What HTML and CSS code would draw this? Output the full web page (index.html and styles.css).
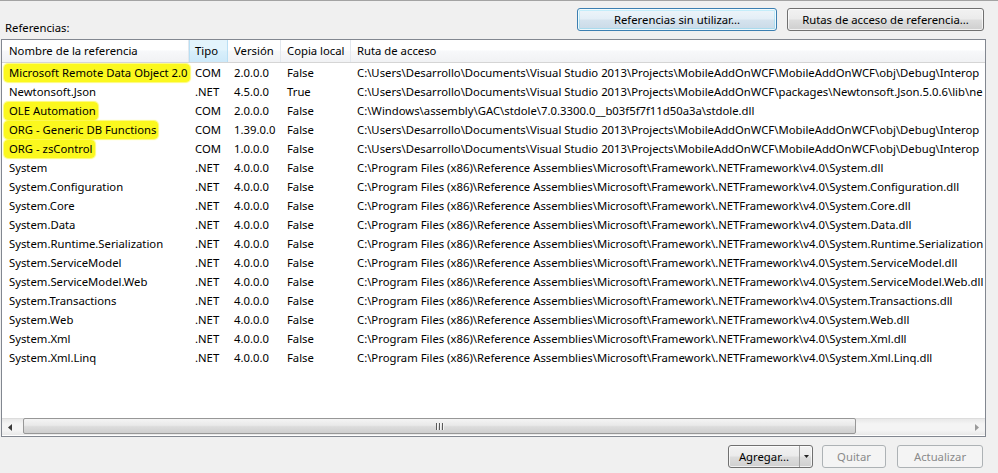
FILE: index.html
```html
<!DOCTYPE html>
<html lang="es">
<head>
<meta charset="utf-8">
<title>Referencias</title>
<link rel="stylesheet" href="styles.css">
</head>
<body>
<div class="dialog">
  <div class="top">
    <span class="label">Referencias:</span>
    <div class="top-buttons">
      <button class="btn btn-default btn-unused">Referencias sin utilizar...</button>
      <button class="btn btn-paths">Rutas de acceso de referencia...</button>
    </div>
  </div>

  <div class="list">
    <div class="hdr row-grid">
      <div class="hc">Nombre de la referencia</div>
      <div class="hc hc-sorted">Tipo</div>
      <div class="hc">Versión</div>
      <div class="hc">Copia local</div>
      <div class="hc hc-last">Ruta de acceso</div>
    </div>
    <div class="rows">
      <div class="row row-grid"><div class="c c-name"><span class="mark">Microsoft Remote Data Object 2.0</span></div><div class="c">COM</div><div class="c">2.0.0.0</div><div class="c">False</div><div class="c c-path">C:\Users\Desarrollo\Documents\Visual Studio 2013\Projects\MobileAddOnWCF\MobileAddOnWCF\obj\Debug\Interop</div></div>
      <div class="row row-grid"><div class="c c-name">Newtonsoft.Json</div><div class="c">.NET</div><div class="c">4.5.0.0</div><div class="c">True</div><div class="c c-path">C:\Users\Desarrollo\Documents\Visual Studio 2013\Projects\MobileAddOnWCF\packages\Newtonsoft.Json.5.0.6\lib\ne</div></div>
      <div class="row row-grid"><div class="c c-name"><span class="mark">OLE Automation</span></div><div class="c">COM</div><div class="c">2.0.0.0</div><div class="c">False</div><div class="c c-path">C:\Windows\assembly\GAC\stdole\7.0.3300.0__b03f5f7f11d50a3a\stdole.dll</div></div>
      <div class="row row-grid"><div class="c c-name"><span class="mark">ORG - Generic DB Functions</span></div><div class="c">COM</div><div class="c">1.39.0.0</div><div class="c">False</div><div class="c c-path">C:\Users\Desarrollo\Documents\Visual Studio 2013\Projects\MobileAddOnWCF\MobileAddOnWCF\obj\Debug\Interop</div></div>
      <div class="row row-grid"><div class="c c-name"><span class="mark">ORG - zsControl</span></div><div class="c">COM</div><div class="c">1.0.0.0</div><div class="c">False</div><div class="c c-path">C:\Users\Desarrollo\Documents\Visual Studio 2013\Projects\MobileAddOnWCF\MobileAddOnWCF\obj\Debug\Interop</div></div>
      <div class="row row-grid"><div class="c c-name">System</div><div class="c">.NET</div><div class="c">4.0.0.0</div><div class="c">False</div><div class="c c-path">C:\Program Files (x86)\Reference Assemblies\Microsoft\Framework\.NETFramework\v4.0\System.dll</div></div>
      <div class="row row-grid"><div class="c c-name">System.Configuration</div><div class="c">.NET</div><div class="c">4.0.0.0</div><div class="c">False</div><div class="c c-path">C:\Program Files (x86)\Reference Assemblies\Microsoft\Framework\.NETFramework\v4.0\System.Configuration.dll</div></div>
      <div class="row row-grid"><div class="c c-name">System.Core</div><div class="c">.NET</div><div class="c">4.0.0.0</div><div class="c">False</div><div class="c c-path">C:\Program Files (x86)\Reference Assemblies\Microsoft\Framework\.NETFramework\v4.0\System.Core.dll</div></div>
      <div class="row row-grid"><div class="c c-name">System.Data</div><div class="c">.NET</div><div class="c">4.0.0.0</div><div class="c">False</div><div class="c c-path">C:\Program Files (x86)\Reference Assemblies\Microsoft\Framework\.NETFramework\v4.0\System.Data.dll</div></div>
      <div class="row row-grid"><div class="c c-name">System.Runtime.Serialization</div><div class="c">.NET</div><div class="c">4.0.0.0</div><div class="c">False</div><div class="c c-path">C:\Program Files (x86)\Reference Assemblies\Microsoft\Framework\.NETFramework\v4.0\System.Runtime.Serialization</div></div>
      <div class="row row-grid"><div class="c c-name">System.ServiceModel</div><div class="c">.NET</div><div class="c">4.0.0.0</div><div class="c">False</div><div class="c c-path">C:\Program Files (x86)\Reference Assemblies\Microsoft\Framework\.NETFramework\v4.0\System.ServiceModel.dll</div></div>
      <div class="row row-grid"><div class="c c-name">System.ServiceModel.Web</div><div class="c">.NET</div><div class="c">4.0.0.0</div><div class="c">False</div><div class="c c-path">C:\Program Files (x86)\Reference Assemblies\Microsoft\Framework\.NETFramework\v4.0\System.ServiceModel.Web.dll</div></div>
      <div class="row row-grid"><div class="c c-name">System.Transactions</div><div class="c">.NET</div><div class="c">4.0.0.0</div><div class="c">False</div><div class="c c-path">C:\Program Files (x86)\Reference Assemblies\Microsoft\Framework\.NETFramework\v4.0\System.Transactions.dll</div></div>
      <div class="row row-grid"><div class="c c-name">System.Web</div><div class="c">.NET</div><div class="c">4.0.0.0</div><div class="c">False</div><div class="c c-path">C:\Program Files (x86)\Reference Assemblies\Microsoft\Framework\.NETFramework\v4.0\System.Web.dll</div></div>
      <div class="row row-grid"><div class="c c-name">System.Xml</div><div class="c">.NET</div><div class="c">4.0.0.0</div><div class="c">False</div><div class="c c-path">C:\Program Files (x86)\Reference Assemblies\Microsoft\Framework\.NETFramework\v4.0\System.Xml.dll</div></div>
      <div class="row row-grid"><div class="c c-name">System.Xml.Linq</div><div class="c">.NET</div><div class="c">4.0.0.0</div><div class="c">False</div><div class="c c-path">C:\Program Files (x86)\Reference Assemblies\Microsoft\Framework\.NETFramework\v4.0\System.Xml.Linq.dll</div></div>
    </div>
    <div class="hscroll">
      <div class="sb-arrow"><svg width="5" height="7" viewBox="0 0 5 7"><path d="M4 0 L0 3.5 L4 7 Z" fill="#3a3a3a"/></svg></div>
      <div class="sb-track">
        <div class="sb-thumb"><span class="grip"></span><span class="grip"></span><span class="grip"></span></div>
      </div>
      <div class="sb-arrow"><svg width="5" height="7" viewBox="0 0 5 7"><path d="M1 0 L5 3.5 L1 7 Z" fill="#9a9a9a"/></svg></div>
    </div>
  </div>

  <div class="bottom">
    <div class="btn split">
      <span class="split-main">Agregar...</span>
      <span class="split-arrow"><svg width="5" height="3" viewBox="0 0 5 3"><path d="M0 0 H5 L2.5 3 Z" fill="#222"/></svg></span>
    </div>
    <button class="btn btn-disabled btn-quitar">Quitar</button>
    <button class="btn btn-disabled btn-actualizar">Actualizar</button>
  </div>
</div>
</body>
</html>
```

FILE: styles.css
```css
* { box-sizing: border-box; }
html, body {
  margin: 0;
  padding: 0;
  background: #f0f0f0;
}
body {
  font-family: "Noto Sans", "Open Sans", "Liberation Sans", sans-serif;
  font-size: 11.3px;
  color: #000;
  width: 998px;
  height: 473px;
  overflow: hidden;
}
.dialog {
  height: 473px;
  border-top: 1px solid #a3a3a3;
  display: flex;
  flex-direction: column;
}
.top {
  height: 38px;
  display: flex;
  justify-content: space-between;
  align-items: flex-start;
}
.label {
  padding-top: 19px;
  padding-left: 5px;
  line-height: 16px;
}
.top-buttons {
  display: flex;
  gap: 10px;
  margin-top: 7px;
  margin-right: 14px;
}
.btn {
  font-family: inherit;
  font-size: 11.3px;
  color: #000;
  height: 23px;
  border: 1px solid #707070;
  border-radius: 3px;
  background: linear-gradient(#f2f2f2 0%, #ebebeb 48%, #dddddd 52%, #cfcfcf 100%);
  box-shadow: inset 0 0 0 1px rgba(255,255,255,0.7);
  padding: 0;
  line-height: 20px;
  text-align: center;
}
.btn-unused { width: 200px; }
.btn-paths { width: 197px; }
.btn-default {
  border-color: #3c7fb1;
  background: linear-gradient(#eef5fa 0%, #e3eef6 48%, #d5e3ee 52%, #c9dae7 100%);
  box-shadow: inset 0 0 0 1px rgba(255,255,255,0.8), inset 0 0 0 2px rgba(72,216,251,0.25);
}
.list {
  margin-left: 1px;
  width: 985px;
  height: 398px;
  border: 1px solid #828790;
  background: #fff;
  display: flex;
  flex-direction: column;
  overflow: hidden;
}
.row-grid {
  display: grid;
  grid-template-columns: 187px 39px 53px 70px 1fr;
}
.hdr {
  height: 23px;
  background: linear-gradient(#ffffff 0%, #ffffff 45%, #f7f8fa 50%, #f1f2f4 100%);
  border-bottom: 1px solid #d5d5d5;
}
.hc {
  line-height: 22px;
  padding-left: 6px;
  border-right: 1px solid #e3e8ee;
  white-space: nowrap;
  overflow: hidden;
}
.hc:first-child { padding-left: 7px; }
.hc-last { border-right: none; }
.hc-sorted {
  background: linear-gradient(#e3f4fc 0%, #e3f4fc 45%, #d9effb 50%, #cde9f9 100%);
  border-left: 1px solid #b9dff4;
  border-right: 1px solid #b9dff4;
  padding-left: 5px;
}
.rows {
  flex: 1;
  overflow: hidden;
}
.row {
  height: 19px;
  line-height: 19px;
}
.c {
  padding-left: 6px;
  white-space: nowrap;
  overflow: hidden;
}
.c-name { padding-left: 7px; overflow: visible; }
.c-path { overflow: hidden; }
.mark {
  background: #fbf81e;
  border-radius: 4px;
  margin-left: -5px;
  padding: 1px 2px 2px 5px;
  box-shadow: 0 0 1px 1px rgba(251,248,30,0.6);
}
.hscroll {
  height: 17px;
  margin-bottom: 1px;
  display: flex;
  background: linear-gradient(#e8e8e8, #f4f4f4 30%, #f4f4f4 70%, #e8e8e8);
  border-top: 1px solid #dcdcdc;
}
.sb-arrow {
  width: 17px;
  display: flex;
  align-items: center;
  justify-content: center;
}
.sb-track {
  flex: 1;
  padding: 0 2px;
  display: flex;
}
.sb-thumb {
  width: 833px;
  margin-left: 2px;
  height: 16px;
  margin-top: -1px;
  border: 1px solid #979797;
  border-radius: 2px;
  background: linear-gradient(#f4f4f4 0%, #e9e9e9 45%, #dcdcdc 55%, #cfcfcf 100%);
  display: flex;
  justify-content: center;
  align-items: center;
  gap: 1px;
}
.grip {
  width: 1px;
  height: 7px;
  background: #5a5a5a;
  box-shadow: 1px 0 0 #f4f4f4;
  margin-right: 1px;
}
.bottom {
  display: flex;
  justify-content: flex-end;
  margin-top: 8px;
  margin-right: 15px;
}
.split {
  width: 85px;
  display: flex;
  padding: 0;
}
.split-main {
  flex: 1;
  line-height: 21px;
  border-right: 1px solid #a0a0a0;
}
.split-arrow {
  width: 12px;
  display: flex;
  align-items: center;
  justify-content: center;
}
.btn-disabled {
  color: #8a8a8a;
  border-color: #adb2b5;
  background: #f4f4f4;
  box-shadow: none;
}
.btn-quitar { width: 64px; margin-left: 9px; }
.btn-actualizar { width: 86px; margin-left: 11px; }
```
